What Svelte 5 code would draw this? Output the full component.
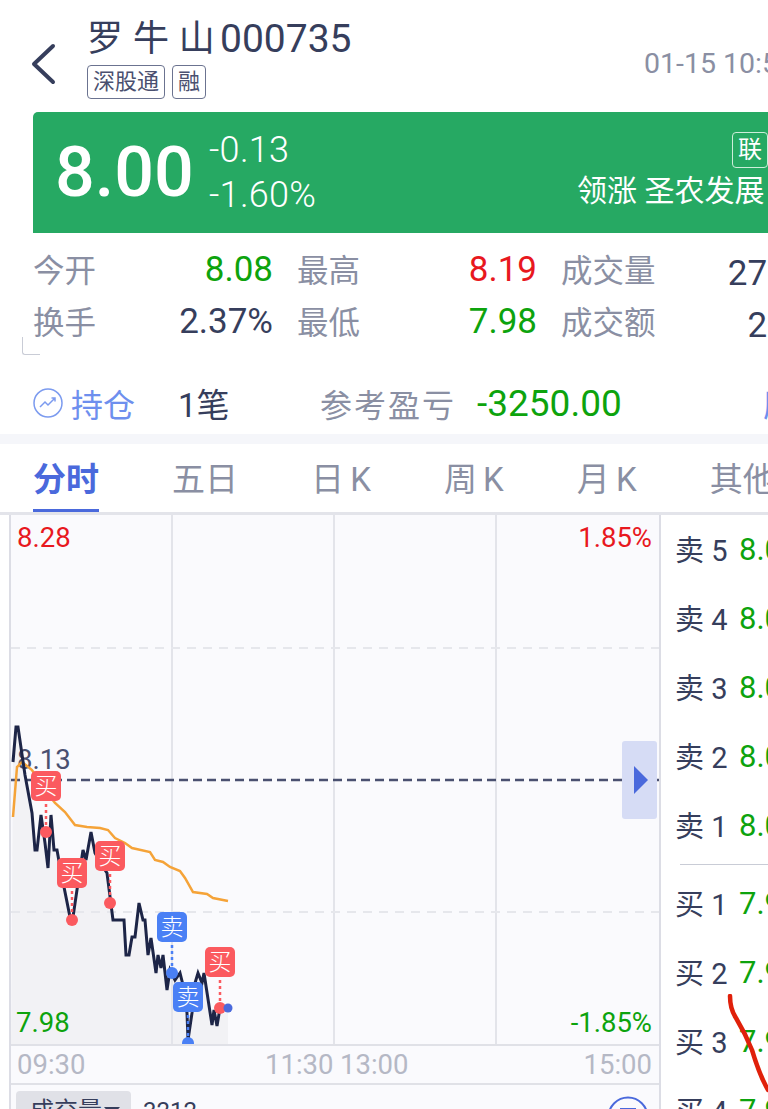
<script>
  const stats = [
    [['今开', '8.08', 'green'], ['最高', '8.19', 'red'], ['成交量', '27.4万', 'dark']],
    [['换手', '2.37%', 'dark'], ['最低', '7.98', 'green'], ['成交额', '2.2亿', 'dark']]
  ];
  const tabs = ['分时', '五日', '日 K', '周 K', '月 K', '其他'];
  const sells = [['卖 5', '8.05'], ['卖 4', '8.04'], ['卖 3', '8.03'], ['卖 2', '8.02'], ['卖 1', '8.01']];
  const buys = [['买 1', '7.99'], ['买 2', '7.98'], ['买 3', '7.97'], ['买 4', '7.96']];
  const price = '13,762 16,727 18,727 25,775 32,813 35,850 37,850 41,815 45,843 48,868 51,815 54,850 57,850 60,867 70,917 73,917 78,883 83,850 86,860 91,832 95,853 105,870 107,873 113,920 124,920 126,955 129,955 132,937 135,937 139,903 143,920 145,920 148,955 151,938 156,973 158,955 161,968 163,955 167,990 170,970 175,980 180,973 183,985 187,1013 188,1040 192,1013 195,983 198,973 202,983 204,973 212,1025 214,1010 217,1026 220,1008';
  const avg = '13,817 17,767 22,762 32,770 45,790 55,803 65,812 75,825 87,827 100,828 108,830 115,838 125,843 132,848 150,852 155,860 163,862 170,867 180,871 185,878 193,892 207,894 213,898 228,901';
  const trades = [
    { t: '买', x: 46, y: 786, dx: 46, dy: 832, c: '#fb5a5f' },
    { t: '买', x: 72, y: 873, dx: 72, dy: 920, c: '#fb5a5f' },
    { t: '买', x: 110, y: 856, dx: 110, dy: 903, c: '#fb5a5f' },
    { t: '卖', x: 172, y: 927, dx: 172, dy: 973, c: '#4a80f5' },
    { t: '卖', x: 188, y: 997, dx: 188, dy: 1043, c: '#4a80f5' },
    { t: '买', x: 220, y: 962, dx: 220, dy: 1008, c: '#fb5a5f' }
  ];
</script>

<div class="page">
  <header class="top">
    <svg class="back" width="26" height="44" viewBox="0 0 26 44" aria-hidden="true"><path d="M23 4 L4 22 L23 40" /></svg>
    <div class="name">
      <div class="title"><span class="cn">罗 牛 山</span><span class="code">000735</span></div>
      <div class="tags"><span>深股通</span><span>融</span></div>
    </div>
    <div class="time">01-15 10:50</div>
  </header>

  <section class="quote">
    <div class="big">8.00</div>
    <div class="delta"><div>-0.13</div><div>-1.60%</div></div>
    <div class="lead">
      <span class="lian">联</span>
      <div class="lead-text">领涨 圣农发展</div>
    </div>
  </section>

  <section class="stats">
    {#each stats as row}
      <div class="stat-row">
        {#each row as [label, value, tone]}
          <div class="stat"><span class="lbl">{label}</span><span class="val {tone}">{value}</span></div>
        {/each}
      </div>
    {/each}
    <i class="corner"></i>
  </section>

  <section class="hold">
    <svg class="hold-ico" width="32" height="32" viewBox="0 0 32 32" aria-hidden="true">
      <circle cx="16" cy="16" r="14" />
      <path d="M8 20 L13 15 L16 18 L23 11 M19.500 11 H23 V14.500" />
    </svg>
    <span class="hold-t">持仓</span>
    <span class="hold-n">1笔</span>
    <span class="hold-l">参考盈亏</span>
    <span class="hold-v">-3250.00</span>
    <span class="hold-h">历史</span>
  </section>

  <div class="gap"></div>

  <nav class="tabs">
    {#each tabs as tab, i}
      <div class="tab" class:on={i === 0}>{tab}</div>
    {/each}
  </nav>

  <section class="market">
    <div class="chart">
      <svg class="plot" width="650" height="530" viewBox="10 515 650 530">
        <rect x="10" y="515" width="650" height="530" fill="#fafafd" />
        <polygon points="11,1045 {price} 228,1008 228,1045" fill="#f2f2f5" />
        <path d="M172 515V1045M334 515V1045M496 515V1045" stroke="#e3e4ea" stroke-width="2" fill="none" />
        <path d="M11 648H660M11 912H660" stroke="#e6e7ec" stroke-width="2" stroke-dasharray="9 7" fill="none" />
        <path d="M11 780H660" stroke="#4a5070" stroke-width="2.500" stroke-dasharray="9 5" fill="none" />
        <text class="lab" x="17" y="547" fill="#e8181e">8.28</text>
        <text class="lab" x="652" y="547" text-anchor="end" fill="#e8181e">1.85%</text>
        <text class="lab" x="17" y="769" fill="#4a5070">8.13</text>
        <text class="lab" x="16" y="1032" fill="#0da30d">7.98</text>
        <text class="lab" x="652" y="1032" text-anchor="end" fill="#0da30d">-1.85%</text>
        <polyline points={avg} fill="none" stroke="#f5a338" stroke-width="2.500" />
        <polyline points={price} fill="none" stroke="#1d2547" stroke-width="3" />
        {#each trades as m}
          <path d="M{m.x} {m.y}V{m.dy}" stroke={m.c} stroke-width="2.500" stroke-dasharray="3 3" />
          <circle cx={m.dx} cy={m.dy} r="6" fill={m.c} />
          <rect x={m.x - 15} y={m.y - 15} width="30" height="30" rx="5" fill={m.c} />
          <text class="mk" x={m.x} y={m.y + 8}>{m.t}</text>
        {/each}
        <circle cx="228" cy="1008" r="4.500" fill="#4a69dc" />
        <rect x="622" y="741" width="35" height="78" rx="3" fill="#d6dcf5" />
        <path d="M634 766L648 780L634 794Z" fill="#4a69dc" />
      </svg>
      <div class="axis">
        <span class="a1">09:30</span>
        <span class="a2">11:30</span>
        <span class="a3">13:00</span>
        <span class="a4">15:00</span>
      </div>
      <div class="sub">
        <span class="vol">成交量<i></i></span>
        <span class="vol-n">3212</span>
        <svg class="zoom-ico" width="44" height="44" viewBox="0 0 44 44" aria-hidden="true"><circle cx="22" cy="22" r="19.500" /><path d="M14 14H30" /></svg>
      </div>
    </div>

    <aside class="book">
      <div class="side">
        {#each sells as [l, v]}
          <div class="level"><span class="lv">{l}</span><span class="pr">{v}</span></div>
        {/each}
      </div>
      <div class="sep"></div>
      <div class="side">
        {#each buys as [l, v]}
          <div class="level"><span class="lv">{l}</span><span class="pr">{v}</span></div>
        {/each}
      </div>
      <svg class="scribble" width="44" height="100" viewBox="0 0 44 100" aria-hidden="true"><path d="M6 2 C6 12 8 18 12 24 C18 34 24 46 28 56 C31 66 36 82 44 96" /></svg>
    </aside>
  </section>
</div>

<style>
  :global(body) { margin: 0; background: #fff; }
  .page {
    width: 768px; height: 1109px; overflow: hidden; background: #fff;
    font-family: Roboto, "Noto Sans CJK SC", sans-serif; color: #363e5c;
  }
  .top { height: 112px; display: flex; position: relative; }
  .back { margin: 42px 0 0 30px; width: 26px; height: 44px; flex: none; }
  .back path { fill: none; stroke: #363e5c; stroke-width: 4; stroke-linecap: round; stroke-linejoin: round; }
  .name { margin: 16px 0 0 31px; }
  .title { font-size: 36px; line-height: 46px; white-space: nowrap; display: flex; }
  .cn { letter-spacing: 0.500px; width: 133px; flex: none; }
  .code { font-size: 39px; }
  .tags { display: flex; gap: 7px; margin-top: 3px; }
  .tags span { border: 1px solid #6b7390; border-radius: 4px; font-size: 22px; line-height: 32px; padding: 0 5px; color: #4a5070; }
  .time { margin: 47px 0 0 auto; font-size: 28.500px; line-height: 34px; color: #8a8fa3; white-space: nowrap; flex: none; width: 124px; }
  .quote {
    margin-left: 33px; height: 121px; background: #26a963; border-radius: 5px 0 0 0;
    display: flex; color: #fff; box-sizing: border-box; position: relative;
  }
  .big { font-size: 70px; font-weight: 500; line-height: 121px; margin-left: 22px; width: 137px; flex: none; }
  .delta { margin: 16px 0 0 17px; font-size: 36px; line-height: 45px; font-weight: 300; letter-spacing: 0.300px; }
  .lead { margin-left: auto; width: 190px; flex: none; white-space: nowrap; text-align: left; }
  .lian { display: block; width: 36px; height: 36px; box-sizing: border-box; border: 1px solid #cdeeda; border-radius: 4px; margin: 20px 0 0 154px; font-size: 24px; line-height: 34px; text-align: center; }
  .lead-text { font-size: 30px; line-height: 40px; margin-top: 3px; margin-left: -1px; }
  .stats { position: relative; height: 136px; padding-top: 9px; box-sizing: border-box; }
  .stat-row { display: flex; height: 52px; align-items: center; padding-left: 33px; }
  .stat { display: flex; justify-content: space-between; align-items: center; width: 240px; margin-right: 24px; flex: none; white-space: nowrap; }
  .stat:last-child { width: 270px; }
  .lbl { font-size: 31.500px; color: #8a8fa3; }
  .val { font-size: 35px; margin-top: 3px; }
  .green { color: #0da30d; }
  .red { color: #e8181e; }
  .dark { color: #363e5c; }
  .corner { position: absolute; left: 22px; top: 104px; width: 18px; height: 18px; box-sizing: border-box; border-left: 1px solid #c9ccd6; border-bottom: 1px solid #c9ccd6; border-radius: 0 0 0 3px; }
  .hold { height: 68px; display: flex; align-items: center; white-space: nowrap; position: relative; margin-top: -2px; padding-top: 4px; box-sizing: border-box; }
  .hold-ico { margin-left: 32px; flex: none; }
  .hold-ico circle, .hold-ico path { fill: none; stroke: #7c9bef; stroke-width: 1.500; }
  .hold-t { font-size: 32px; color: #6e8fee; margin-left: 7px; width: 107px; flex: none; }
  .hold-n { font-size: 33px; width: 142px; flex: none; }
  .hold-l { font-size: 32px; letter-spacing: 2px; color: #8a8fa3; width: 157px; flex: none; }
  .hold-v { font-size: 37px; color: #0da30d; width: 286px; flex: none; }
  .hold-h { font-size: 32px; color: #6e8fee; }
  .gap { height: 10px; background: #f5f6fa; margin-top: -1px; }
  .tabs { display: flex; height: 68px; white-space: nowrap; padding-left: 33px; gap: 73px; }
  .tab { font-size: 33px; color: #8a8fa3; line-height: 72px; height: 68px; box-sizing: border-box; flex: none; text-align: center; word-spacing: -2px; }
  .tab.on { color: #4a69dc; font-weight: 700; border-bottom: 3px solid #4a69dc; }
  .market { display: flex; border-top: 3px solid #e3e4ea; height: 600px; }
  .chart { margin-left: 9px; flex: none; border-left: 2px solid #dcdde5; border-right: 2px solid #dcdde5; width: 648px; overflow: hidden; position: relative; }
  .plot { display: block; margin: 0 0 0 -1px; }
  .lab { font-size: 27.500px; font-family: Roboto, sans-serif; }
  .mk { font-size: 23px; fill: #fff; text-anchor: middle; font-family: "Noto Sans CJK SC", sans-serif; font-weight: 300; }
  .axis { height: 37px; border-top: 2px solid #e0e1e7; border-bottom: 2px solid #e0e1e7; position: relative; background: #fafafd; font-size: 27.500px; line-height: 37px; color: #b5b8c5; margin-top: -1px; }
  .axis span { position: absolute; top: 0; }
  .a1 { left: 6px; }
  .a2 { left: 254px; }
  .a3 { left: 329px; }
  .a4 { right: 7px; }
  .sub { height: 40px; padding: 6px 0 0 5px; display: flex; align-items: flex-start; background: #fafafd; position: relative; }
  .vol { width: 115px; height: 40px; background: #e0e1e7; border-radius: 4px 4px 0 0; font-size: 24px; line-height: 40px; padding-left: 14px; box-sizing: border-box; white-space: nowrap; }
  .vol i { display: inline-block; width: 0; height: 0; border-left: 8px solid transparent; border-right: 8px solid transparent; border-top: 9px solid #363e5c; margin-left: 2px; vertical-align: 3px; }
  .vol-n { font-size: 24px; line-height: 40px; margin-left: 12px; }
  .zoom-ico { position: absolute; left: 595px; top: 10px; }
  .zoom-ico circle, .zoom-ico path { fill: none; stroke: #4a69dc; stroke-width: 2; }
  .book { flex: 1; position: relative; padding: 0 0 0 14px; overflow: hidden; white-space: nowrap; }
  .side { margin-top: -1px; }
  .level { height: 69px; display: flex; align-items: center; width: 120px; }
  .lv { font-size: 29px; width: 64px; flex: none; margin-top: -2px; }
  .pr { font-size: 31px; color: #0da30d; margin-top: 2px; }
  .sep { height: 1px; background: #c9ccd6; margin: 5px 0 4px 5px; }
  .scribble { position: absolute; left: 63px; top: 479px; }
  .scribble path { fill: none; stroke: #e0200a; stroke-width: 4.500; stroke-linecap: round; }
</style>
